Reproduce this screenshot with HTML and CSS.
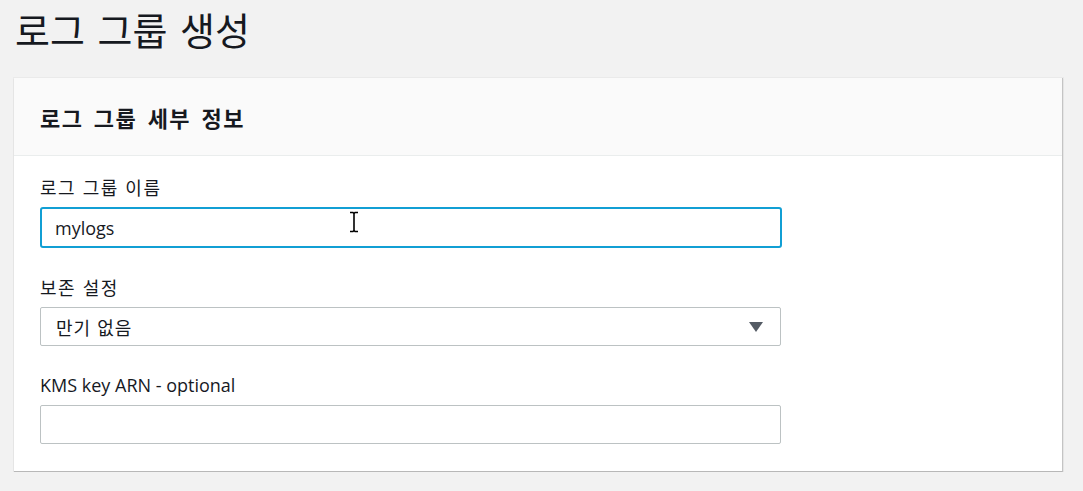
FILE: index.html
```html
<!DOCTYPE html>
<html lang="ko">
<head>
<meta charset="utf-8">
<link rel="stylesheet" href="styles.css">
</head>
<body>
<div class="page">
  <h1 class="title">로그 그룹 생성</h1>
  <section class="card">
    <header class="card-head">
      <h2>로그 그룹 세부 정보</h2>
    </header>
    <div class="card-body">
      <div class="field">
        <label class="label ko">로그 그룹 이름</label>
        <div class="input focused">
          <span class="value">mylogs</span>
          <svg class="ibeam" width="12" height="22" viewBox="0 0 12 22">
            <path d="M2 1.5h3l1 1 1-1h3M6 2.5v17M2 20.5h3l1-1 1 1h3" fill="none" stroke="#000" stroke-width="1.6"/>
          </svg>
        </div>
      </div>
      <div class="field">
        <label class="label ko">보존 설정</label>
        <div class="input select">
          <span class="value ko">만기 없음</span>
          <svg class="caret" width="14" height="10" viewBox="0 0 14 10">
            <path d="M0 0h14L7 10z" fill="#545b64"/>
          </svg>
        </div>
      </div>
      <div class="field">
        <label class="label">KMS key ARN - optional</label>
        <div class="input"></div>
      </div>
    </div>
  </section>
</div>
</body>
</html>
```
FILE: styles.css
```css
* { box-sizing: border-box; }
html, body {
  margin: 0;
  padding: 0;
  background: #f2f2f2;
  font-family: "Open Sans", "Noto Sans CJK KR", sans-serif;
  color: #16191f;
}
.page {
  padding: 0 21px 0 14px;
}
.title {
  margin: 0;
  padding: 4px 0 0 1px;
  height: 78px;
  font-family: "Noto Sans CJK KR", sans-serif;
  font-weight: 400;
  font-size: 38px;
  line-height: 50px;
  letter-spacing: 0;
  word-spacing: 2px;
  color: #16191f;
}
.card {
  background: #fff;
  border-bottom: 1px solid #b8b8b8;
  border-right: 1px solid #c4c4c4;
  box-shadow: 0 1px 1px 0 rgba(0,0,0,0.12), 0 0 0 1px rgba(0,0,0,0.03);
  width: 1049px;
}
.card-head {
  background: #fafafa;
  border-bottom: 1px solid #eaeded;
  height: 78px;
  display: flex;
  align-items: center;
  padding: 0 26px;
}
.card-head h2 {
  margin: 0;
  font-family: "Noto Sans CJK KR", sans-serif;
  font-weight: 700;
  font-size: 22px;
  line-height: 28px;
  letter-spacing: 1.4px;
  word-spacing: 3px;
  color: #16191f;
}
.card-body {
  padding: 20px 26px 27px;
  display: flex;
  flex-direction: column;
  gap: 28px;
}
.field {
  display: flex;
  flex-direction: column;
  gap: 9px;
}
.label {
  font-family: "Open Sans", "Noto Sans CJK KR", sans-serif;
  font-size: 18px;
  line-height: 22px;
  color: #16191f;
}
.label.ko {
  font-family: "Noto Sans CJK KR", sans-serif;
  letter-spacing: 1.5px;
}
.input {
  position: relative;
  width: 741px;
  height: 39px;
  border: 1px solid #bcc2c3;
  border-radius: 2px;
  background: #fff;
  display: flex;
  align-items: center;
  padding: 0 15px;
}
.input.focused {
  width: 742px;
  height: 41px;
  border: 2px solid #119fd4;
  border-radius: 3px;
  padding: 0 13px;
}
.value {
  font-family: "Open Sans", "Noto Sans CJK KR", sans-serif;
  font-size: 18px;
  color: #16191f;
}
.value.ko {
  font-family: "Noto Sans CJK KR", sans-serif;
  letter-spacing: 1px;
}
.ibeam {
  position: absolute;
  left: 306px;
  top: 2px;
}
.caret {
  margin-left: auto;
  margin-right: 2px;
}
```
